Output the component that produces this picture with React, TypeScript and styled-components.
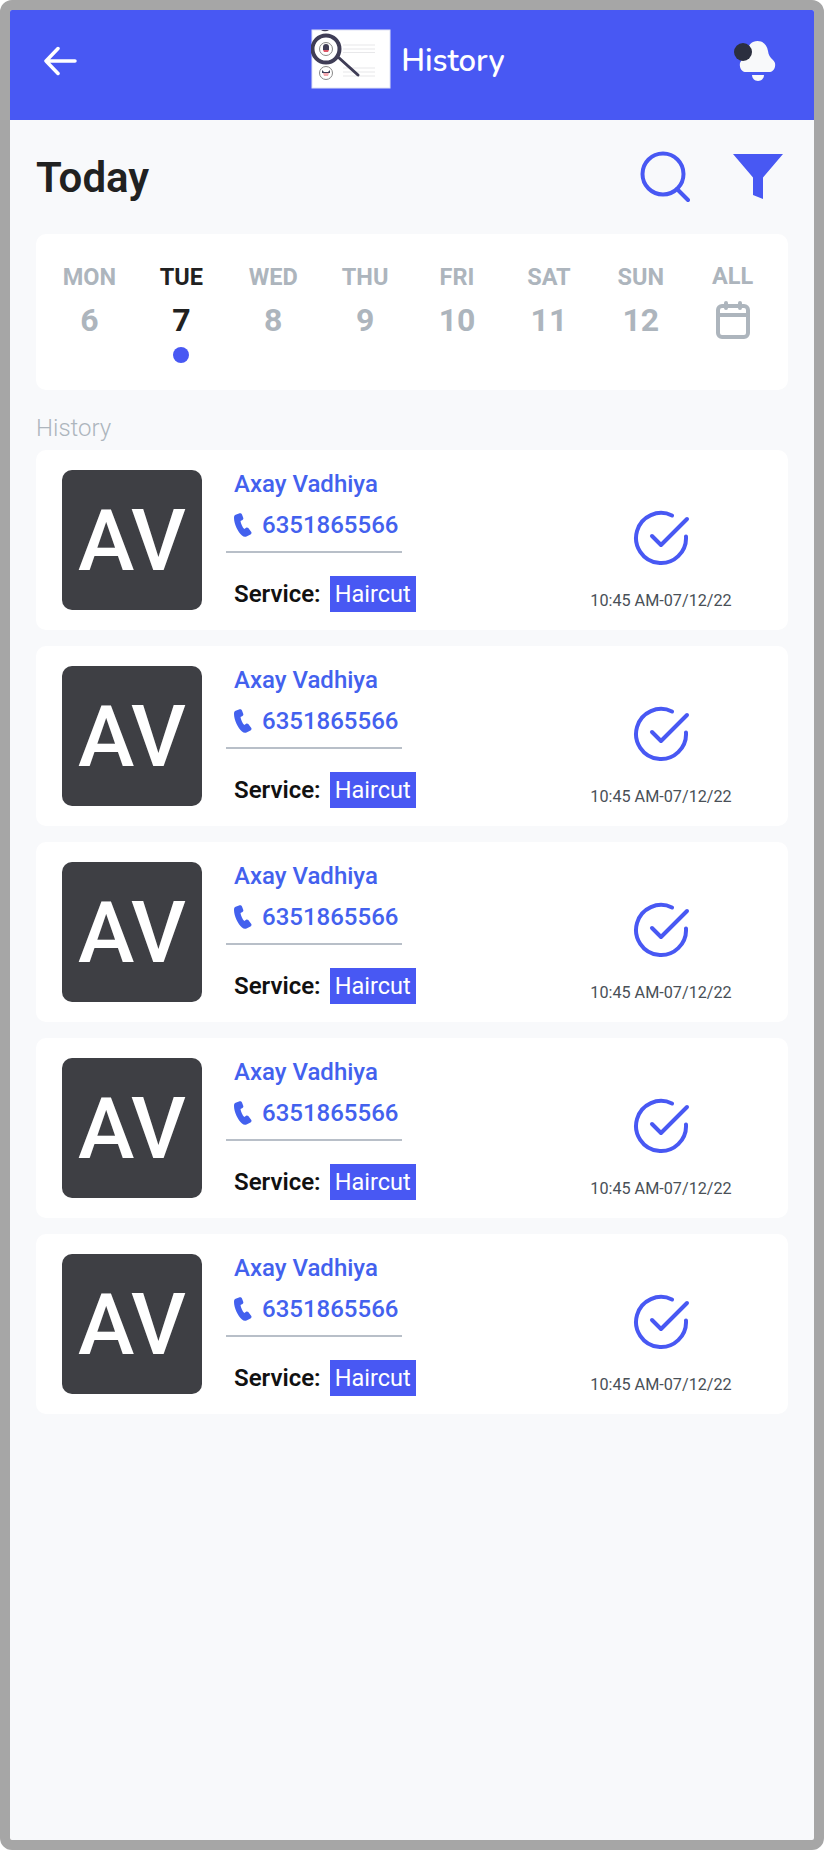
import React from "react";
import styled, { createGlobalStyle } from "styled-components";

const Global = createGlobalStyle`
  html, body { margin: 0; padding: 0; background: #fff; }
  * { box-sizing: border-box; }
`;
const BLUE = "#4858f3";
const Frame = styled.div`
  width: 824px; height: 1850px; border: 10px solid #a6a6a6; border-radius: 12px;
  background: #f8f9fb; font-family: Roboto, sans-serif; overflow: hidden;
`;
const Header = styled.header`
  height: 110px; background: ${BLUE}; display: grid; grid-template-columns: 1fr auto 1fr; align-items: center; padding: 0 38px 0 34px;
`;
const BackButton = styled.div`display: flex; align-items: center; height: 100%; padding-bottom: 8px;`;
const TitleGroup = styled.div`display: flex; align-items: center; gap: 10px; padding-bottom: 14px; margin-right: 4px;`;
const Title = styled.h1`margin: 0; padding-top: 6px; font: 600 31px Nunito, Lato, sans-serif; color: #fff;`;
const BellWrap = styled.div`display: flex; justify-content: flex-end; padding-bottom: 6px;`;
const Content = styled.main`padding: 0 26px;`;
const TodayRow = styled.div`display: flex; justify-content: space-between; align-items: center; height: 114px; padding-right: 5px;`;
const Today = styled.h2`margin: 0; font: 600 42px Roboto, sans-serif; color: #212121;`;
const Actions = styled.div`display: flex; align-items: center; gap: 43px;`;
const WeekCard = styled.section`
  height: 156px; border-radius: 10px; background: #fff; display: grid; grid-template-columns: repeat(8, 91.900px); padding: 27px 0 0 7.500px;
`;
const Day = styled.div`display: flex; flex-direction: column; align-items: center;`;
const DayName = styled.div<{ $on?: boolean; $up?: boolean }>`
  font: 700 23.500px/32px Roboto, sans-serif; margin-top: ${p => (p.$up ? "-1px" : "0")}; color: ${p => (p.$on ? "#212121" : "#adb5bd")};
`;
const DayNum = styled.div<{ $on?: boolean }>`font: 700 32px/40px Roboto, sans-serif; margin-top: 7px; color: ${p => (p.$on ? "#212121" : "#adb5bd")};`;
const Dot = styled.div`width: 16px; height: 16px; border-radius: 50%; background: ${BLUE}; margin-top: 7px;`;
const CalWrap = styled.div`margin-top: 9px; height: 38px;`;
const SectionLabel = styled.div`font: 300 24px/30px Roboto, sans-serif; color: #adb5bd; margin-top: 23px; height: 37px;`;
const List = styled.div`display: flex; flex-direction: column; gap: 16px;`;
const Card = styled.article`
  height: 180px; background: #fff; border-radius: 10px; padding: 20px 0 0 26px; display: grid; grid-template-columns: 140px 24px 220px 1fr;
`;
const Avatar = styled.div`
  grid-column: 1; width: 140px; height: 140px; border-radius: 10px; background: #3e3f44; color: #fff; padding-top: 1px;
  display: flex; align-items: center; justify-content: center; font: 500 85px Roboto, sans-serif;
`;
const Info = styled.div`grid-column: 3; display: flex; flex-direction: column;`;
const Name = styled.div`font: 500 24px/28px Roboto, sans-serif; color: #4361ee; padding-left: 8px;`;
const Phone = styled.div`display: flex; align-items: center; gap: 10px; padding: 13px 0 0 8px; font: 500 24px/28px Roboto, sans-serif; color: #4361ee;`;
const Rule = styled.div`width: 176px; height: 2px; background: #b8bfc8; margin-top: 12px;`;
const ServiceRow = styled.div`display: flex; align-items: center; gap: 9px; padding: 23px 0 0 8px; color: #111; font: 600 24px Roboto, sans-serif;`;
const Pill = styled.span`background: ${BLUE}; color: #fff; height: 36px; padding: 0 5px; font: 400 23.500px/36px Roboto, sans-serif;`;
const Status = styled.div`grid-column: 4; display: flex; flex-direction: column; align-items: center; padding: 40px 0 0 88px;`;
const Time = styled.div`font: 400 16.200px/20px Roboto, sans-serif; color: #495057; margin-top: 21px;`;

const Logo = () => (
  <svg width="80" height="64" viewBox="0 0 80 64" style={{ display: "block" }}>
    <rect x="1" y="4" width="78" height="58" fill="#fff" stroke="#dfe2f5" />
    <path d="M10 4a5 3 0 0 0 8 0z" fill="#3f3d56" />
    <circle cx="15" cy="23" r="6.500" fill="#fff" stroke="#888" />
    <path d="M12 24v-3a3 3 0 0 1 6 0v3z" fill="#3f3d56" />
    <path d="M12 24h6l-1 2h-4z" fill="#d56" />
    <circle cx="15" cy="47" r="6.500" fill="#fff" stroke="#888" />
    <path d="M11 44l2 2h4l2-2v3h-8z" fill="#3f3d56" />
    <path d="M12 47h6l-1 3h-4z" fill="#f4a9b0" />
    <path d="M32 19h32M32 23h32M32 26.500h32M32 42h32M32 46h32M32 50h32" stroke="#e8e8ea" strokeWidth="1.200" />
    <circle cx="15" cy="23" r="13.500" fill="none" stroke="#3f3d56" strokeWidth="4" />
    <path d="M27 31l20 18" stroke="#3f3d56" strokeWidth="3" strokeLinecap="round" />
  </svg>
);
const CheckIcon = () => (
  <svg width="60" height="60" viewBox="0 0 60 60" style={{ display: "block" }}>
    <path d="M41 5.500a25 25 0 1 0 14 21" fill="none" stroke={BLUE} strokeWidth="4" strokeLinecap="round" />
    <path d="M21 26l9 9 26-26" fill="none" stroke={BLUE} strokeWidth="4" strokeLinecap="round" strokeLinejoin="round" />
  </svg>
);
const PhoneIcon = () => (
  <svg width="18" height="24" viewBox="0 0 18 24" style={{ display: "block" }}>
    <path d="M5 .5 1.600 1.800C.3 2.400 0 3.500 0 5c0 6 4 14 8 17.500 1.400 1.200 3 1.600 4.500.9l4-2c1-.6 1.300-1.600.8-2.500l-3-3.800c-.6-.7-1.400-.9-2.200-.4l-1.800 1.200C8.500 14.500 6.800 10.500 6.500 8l2-1c.8-.5 1-1.300.8-2.100L8 1.400C7.500.4 6.200 0 5 .5z" fill="#4361ee" />
  </svg>
);
const days: [string, number][] = [["MON", 6], ["TUE", 7], ["WED", 8], ["THU", 9], ["FRI", 10], ["SAT", 11], ["SUN", 12]];

export default function App() {
  return (
    <Frame>
      <Global />
      <Header>
        <BackButton>
          <svg width="34" height="30" viewBox="0 0 34 30" fill="none" stroke="#fff" strokeWidth="3.500" strokeLinecap="round" strokeLinejoin="round">
            <path d="M31 15H2M14 2.500 2 15l12 12.500" />
          </svg>
        </BackButton>
        <TitleGroup>
          <Logo />
          <Title>History</Title>
        </TitleGroup>
        <BellWrap>
          <svg width="42" height="42" viewBox="0 0 42 42">
            <path d="M23.500 0C29 0 33 4 34 10c.5 4 2 6 5 9 2 2 2.500 4 2 6.500-.5 3.500-3 5.500-6 5.500H12c-3 0-5.500-2-6-5.500-.5-2.500 0-4.500 2-6.500 3-3 4.500-5 5-9 1-6 5-10 10.500-10z" fill="#f8f9fa" />
            <path d="M18 34h12c0 3-2.500 6-6 6s-6-3-6-6z" fill="#f8f9fa" />
            <circle cx="9" cy="11" r="9" fill="#2b2f3f" />
          </svg>
        </BellWrap>
      </Header>
      <Content>
        <TodayRow>
          <Today>Today</Today>
          <Actions>
            <svg width="50" height="52" viewBox="0 0 50 52" fill="none" stroke={BLUE} strokeWidth="4" strokeLinecap="round">
              <circle cx="23" cy="23" r="20.500" />
              <path d="M37 38l11 11" />
            </svg>
            <svg width="50" height="46" viewBox="0 0 50 46" style={{ display: "block" }}>
              <path d="M0 0h50L30 23.500V45l-10-4V23.500z" fill={BLUE} />
            </svg>
          </Actions>
        </TodayRow>
        <WeekCard>
          {days.map(([n, d]) => (
            <Day key={n}>
              <DayName $on={d === 7}>{n}</DayName>
              <DayNum $on={d === 7}>{d}</DayNum>
              {d === 7 && <Dot />}
            </Day>
          ))}
          <Day>
            <DayName $up>ALL</DayName>
            <CalWrap>
              <svg width="34" height="38" viewBox="0 0 34 38" style={{ display: "block" }} fill="none" stroke="#adb5bd" strokeWidth="4" strokeLinecap="round">
                <rect x="2" y="5" width="30" height="31" rx="4" />
                <path d="M2 14h30M10 2v5M24 2v5" />
              </svg>
            </CalWrap>
          </Day>
        </WeekCard>
        <SectionLabel>History</SectionLabel>
        <List>
          {[0, 1, 2, 3, 4].map(i => (
            <Card key={i}>
              <Avatar>AV</Avatar>
              <Info>
                <Name>Axay Vadhiya</Name>
                <Phone><PhoneIcon />6351865566</Phone>
                <Rule />
                <ServiceRow>Service: <Pill>Haircut</Pill></ServiceRow>
              </Info>
              <Status>
                <CheckIcon />
                <Time>10:45 AM-07/12/22</Time>
              </Status>
            </Card>
          ))}
        </List>
      </Content>
    </Frame>
  );
}
